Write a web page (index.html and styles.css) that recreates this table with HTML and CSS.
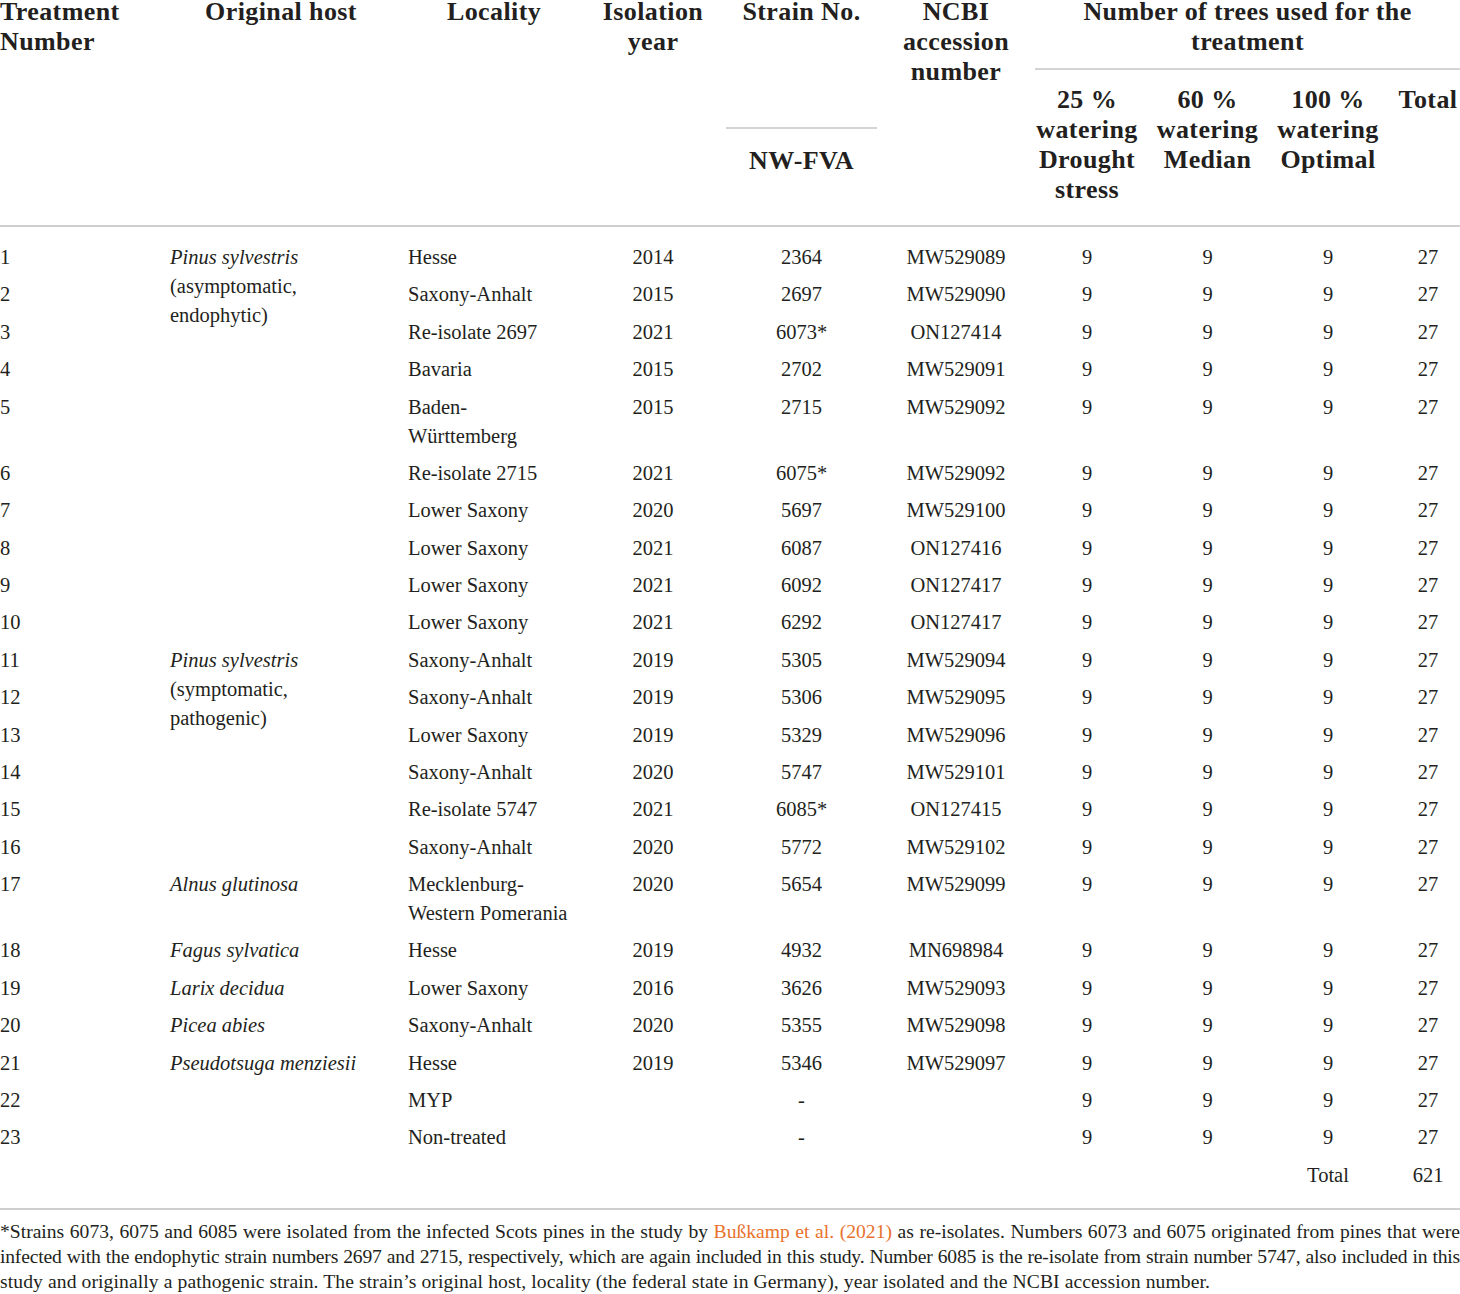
FILE: index.html
```html
<!DOCTYPE html>
<html lang="en">
<head>
<meta charset="utf-8">
<title>Table</title>
<link rel="stylesheet" href="styles.css">
</head>
<body>
<div class="wrap">
<table class="tbl">
  <colgroup>
    <col class="w1"><col class="w2"><col class="w3"><col class="w4"><col class="w5">
    <col class="w6"><col class="w7"><col class="w8"><col class="w9"><col class="w10">
  </colgroup>
  <thead>
    <tr>
      <th rowspan="2" class="left first">Treatment<br>Number</th>
      <th rowspan="2">Original host</th>
      <th rowspan="2">Locality</th>
      <th rowspan="2">Isolation<br>year</th>
      <th rowspan="2" class="strain">
        <div class="strain-top">Strain No.</div>
        <div class="strain-sub">NW-FVA</div>
      </th>
      <th rowspan="2">NCBI<br>accession<br>number</th>
      <th colspan="4" class="last trees"><div class="trees-top">Number of trees used for the<br>treatment</div></th>
    </tr>
    <tr class="sub">
      <th>25&nbsp;%<br>watering<br>Drought<br>stress</th>
      <th>60&nbsp;%<br>watering<br>Median</th>
      <th>100&nbsp;%<br>watering<br>Optimal</th>
      <th class="last">Total</th>
    </tr>
  </thead>
  <tbody>
    <tr class="r-first"><td class="first">1</td><td rowspan="10" class="host"><i>Pinus sylvestris</i><br>(asymptomatic,<br>endophytic)</td><td class="loc">Hesse</td><td>2014</td><td>2364</td><td>MW529089</td><td>9</td><td>9</td><td>9</td><td class="last">27</td></tr>
    <tr><td class="first">2</td><td class="loc">Saxony-Anhalt</td><td>2015</td><td>2697</td><td>MW529090</td><td>9</td><td>9</td><td>9</td><td class="last">27</td></tr>
    <tr><td class="first">3</td><td class="loc">Re-isolate 2697</td><td>2021</td><td>6073*</td><td>ON127414</td><td>9</td><td>9</td><td>9</td><td class="last">27</td></tr>
    <tr><td class="first">4</td><td class="loc">Bavaria</td><td>2015</td><td>2702</td><td>MW529091</td><td>9</td><td>9</td><td>9</td><td class="last">27</td></tr>
    <tr><td class="first">5</td><td class="loc">Baden-<br>Württemberg</td><td>2015</td><td>2715</td><td>MW529092</td><td>9</td><td>9</td><td>9</td><td class="last">27</td></tr>
    <tr><td class="first">6</td><td class="loc">Re-isolate 2715</td><td>2021</td><td>6075*</td><td>MW529092</td><td>9</td><td>9</td><td>9</td><td class="last">27</td></tr>
    <tr><td class="first">7</td><td class="loc">Lower Saxony</td><td>2020</td><td>5697</td><td>MW529100</td><td>9</td><td>9</td><td>9</td><td class="last">27</td></tr>
    <tr><td class="first">8</td><td class="loc">Lower Saxony</td><td>2021</td><td>6087</td><td>ON127416</td><td>9</td><td>9</td><td>9</td><td class="last">27</td></tr>
    <tr><td class="first">9</td><td class="loc">Lower Saxony</td><td>2021</td><td>6092</td><td>ON127417</td><td>9</td><td>9</td><td>9</td><td class="last">27</td></tr>
    <tr><td class="first">10</td><td class="loc">Lower Saxony</td><td>2021</td><td>6292</td><td>ON127417</td><td>9</td><td>9</td><td>9</td><td class="last">27</td></tr>
    <tr><td class="first">11</td><td rowspan="6" class="host"><i>Pinus sylvestris</i><br>(symptomatic,<br>pathogenic)</td><td class="loc">Saxony-Anhalt</td><td>2019</td><td>5305</td><td>MW529094</td><td>9</td><td>9</td><td>9</td><td class="last">27</td></tr>
    <tr><td class="first">12</td><td class="loc">Saxony-Anhalt</td><td>2019</td><td>5306</td><td>MW529095</td><td>9</td><td>9</td><td>9</td><td class="last">27</td></tr>
    <tr><td class="first">13</td><td class="loc">Lower Saxony</td><td>2019</td><td>5329</td><td>MW529096</td><td>9</td><td>9</td><td>9</td><td class="last">27</td></tr>
    <tr><td class="first">14</td><td class="loc">Saxony-Anhalt</td><td>2020</td><td>5747</td><td>MW529101</td><td>9</td><td>9</td><td>9</td><td class="last">27</td></tr>
    <tr><td class="first">15</td><td class="loc">Re-isolate 5747</td><td>2021</td><td>6085*</td><td>ON127415</td><td>9</td><td>9</td><td>9</td><td class="last">27</td></tr>
    <tr><td class="first">16</td><td class="loc">Saxony-Anhalt</td><td>2020</td><td>5772</td><td>MW529102</td><td>9</td><td>9</td><td>9</td><td class="last">27</td></tr>
    <tr><td class="first">17</td><td class="host"><i>Alnus glutinosa</i></td><td class="loc">Mecklenburg-<br>Western Pomerania</td><td>2020</td><td>5654</td><td>MW529099</td><td>9</td><td>9</td><td>9</td><td class="last">27</td></tr>
    <tr><td class="first">18</td><td class="host"><i>Fagus sylvatica</i></td><td class="loc">Hesse</td><td>2019</td><td>4932</td><td>MN698984</td><td>9</td><td>9</td><td>9</td><td class="last">27</td></tr>
    <tr><td class="first">19</td><td class="host"><i>Larix decidua</i></td><td class="loc">Lower Saxony</td><td>2016</td><td>3626</td><td>MW529093</td><td>9</td><td>9</td><td>9</td><td class="last">27</td></tr>
    <tr><td class="first">20</td><td class="host"><i>Picea abies</i></td><td class="loc">Saxony-Anhalt</td><td>2020</td><td>5355</td><td>MW529098</td><td>9</td><td>9</td><td>9</td><td class="last">27</td></tr>
    <tr><td class="first">21</td><td class="host"><i>Pseudotsuga menziesii</i></td><td class="loc">Hesse</td><td>2019</td><td>5346</td><td>MW529097</td><td>9</td><td>9</td><td>9</td><td class="last">27</td></tr>
    <tr><td class="first">22</td><td class="host"></td><td class="loc">MYP</td><td></td><td>-</td><td></td><td>9</td><td>9</td><td>9</td><td class="last">27</td></tr>
    <tr><td class="first">23</td><td class="host"></td><td class="loc">Non-treated</td><td></td><td>-</td><td></td><td>9</td><td>9</td><td>9</td><td class="last">27</td></tr>
    <tr class="r-last"><td class="first"></td><td class="host"></td><td class="loc"></td><td></td><td></td><td></td><td></td><td></td><td>Total</td><td class="last">621</td></tr>
  </tbody>
</table>
<div class="note">
  <div class="note-line">*Strains 6073, 6075 and 6085 were isolated from the infected Scots pines in the study by <span class="ref">Bußkamp et al. (2021)</span> as re-isolates. Numbers 6073 and 6075 originated from pines that were</div>
  <div class="note-line tight">infected with the endophytic strain numbers 2697 and 2715, respectively, which are again included in this study. Number 6085 is the re-isolate from strain number 5747, also included in this</div>
  <div class="note-end">study and originally a pathogenic strain. The strain’s original host, locality (the federal state in Germany), year isolated and the NCBI accession number.</div>
</div>
</div>
</body>
</html>
```

FILE: styles.css
```css
html, body {
  margin: 0;
  padding: 0;
  background: #ffffff;
}

body {
  font-family: "Liberation Serif", "Times New Roman", serif;
  color: #231f20;
  overflow: hidden;
}

.wrap {
  width: 1460px;
  margin-top: -3px;
}

.tbl {
  width: 1460px;
  table-layout: fixed;
  border-collapse: collapse;
}

.w1 { width: 162px; }
.w2 { width: 238px; }
.w3 { width: 188px; }
.w4 { width: 130px; }
.w5 { width: 167px; }
.w6 { width: 142px; }
.w7 { width: 120px; }
.w8 { width: 121px; }
.w9 { width: 120px; }
.w10 { width: 72px; }

.tbl thead {
  border-bottom: 2px solid #cfcfcf;
}

.tbl th {
  font-size: 26px;
  line-height: 30px;
  font-weight: bold;
  letter-spacing: 0.4px;
  text-align: center;
  vertical-align: top;
  padding: 0 8px;
}

.tbl th.left {
  text-align: left;
}

.tbl .first {
  padding-left: 0;
}

.tbl .last {
  padding-right: 0;
}

.trees-top {
  padding-bottom: 11px;
  border-bottom: 2px solid #d4d4d4;
}

.strain-top {
  padding-bottom: 100px;
  border-bottom: 2px solid #d4d4d4;
}

.strain-sub {
  margin-top: 17px;
}

.tbl tr.sub th {
  padding-top: 15px;
  padding-bottom: 20px;
}

.tbl td {
  font-size: 20.5px;
  line-height: 29px;
  text-align: center;
  vertical-align: top;
  padding: 4.2px 8px;
}

.tbl td.first,
.tbl td.host,
.tbl td.loc {
  text-align: left;
}

.tbl td.loc {
  white-space: nowrap;
}

.tbl tr.r-first td {
  padding-top: 16px;
}

.tbl tr.r-last td {
  padding-bottom: 18px;
}

.tbl tbody {
  border-bottom: 2px solid #cfcfcf;
}

.note {
  margin-top: 9px;
  font-size: 19.6px;
  line-height: 25px;
}

.note-line {
  text-align: justify;
  text-align-last: justify;
  white-space: nowrap;
}

.note-line.tight {
  letter-spacing: -0.2px;
}

.note-end {
  text-align: left;
  white-space: nowrap;
  letter-spacing: 0.1px;
}

.ref {
  color: #e8722c;
}
```
